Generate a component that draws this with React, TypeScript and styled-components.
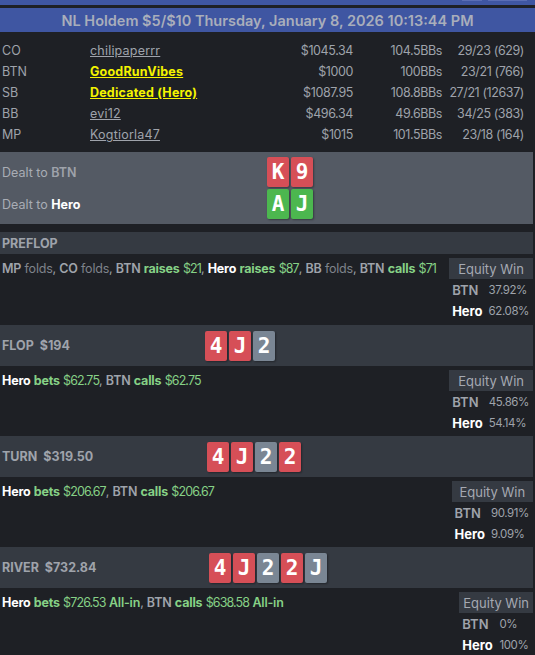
import React from 'react';
import styled, { createGlobalStyle } from 'styled-components';

const GlobalStyle = createGlobalStyle`
  body {
    margin: 0;
    background: #1e2025;
    font-family: Inter, "DejaVu Sans", sans-serif;
  }
`;

const COLORS = {
  bg: '#1e2025',
  blue: '#3f56a2',
  blueLight: '#5a6db4',
  bar: '#353a42',
  panel: '#545a64',
  text: '#9fa3ab',
  dim: '#7e838b',
  white: '#ffffff',
  yellow: '#f4f400',
  green: '#86d186',
  red: '#d64f57',
  cardGreen: '#4cb74f',
  cardGray: '#7a8694',
};

const TopStrip = styled.div`
  height: 5px;
  background: ${COLORS.blue};
  display: flex;
  justify-content: flex-end;
  gap: 6px;
  padding-right: 8px;
  border-bottom: 3px solid ${COLORS.bg};
`;

const StripButton = styled.div<{ $w: number }>`
  width: ${({ $w }) => $w}px;
  height: 1px;
  background: ${COLORS.blueLight};
`;

const TitleBar = styled.div`
  height: 24px;
  background: ${COLORS.blue};
  color: #a9aebb;
  font-size: 14.5px;
  font-weight: 600;
  display: flex;
  align-items: center;
  justify-content: center;
`;

const Content = styled.div`
  margin-right: 2px;
`;

const PlayerTable = styled.div`
  padding: 8px 9px 7px 2px;
  display: grid;
  grid-template-columns: 88px 1fr 90px 89px 82px;
  grid-auto-rows: 21px;
  align-items: center;
  font-size: 12.5px;
  color: ${COLORS.text};
`;

const Pos = styled.div``;

const Name = styled.span<{ $hl?: boolean }>`
  text-decoration: underline;
  color: ${({ $hl }) => ($hl ? COLORS.yellow : COLORS.text)};
  font-weight: ${({ $hl }) => ($hl ? 700 : 400)};
  letter-spacing: 0.2px;
`;

const Num = styled.div`
  text-align: right;
  letter-spacing: -0.4px;
`;

const DealtPanel = styled.div`
  background: ${COLORS.panel};
  padding: 4px 0;
  margin-bottom: 8px;
`;

const DealtRow = styled.div`
  display: grid;
  grid-template-columns: 265px auto;
  align-items: center;
  height: 32px;
  padding-left: 2px;
  font-size: 12.5px;
  color: #a9adb5;
`;

const Who = styled.span<{ $hero?: boolean }>`
  font-weight: ${({ $hero }) => ($hero ? 700 : 600)};
  color: ${({ $hero }) => ($hero ? COLORS.white : COLORS.text)};
`;

const Cards = styled.div`
  display: flex;
  gap: 2px;
`;

const Card = styled.div<{ $bg: string }>`
  width: 22px;
  height: 30px;
  border-radius: 2px;
  background: ${({ $bg }) => $bg};
  color: #fff;
  font-family: "DejaVu Sans Mono", monospace;
  font-weight: 700;
  font-size: 21px;
  display: flex;
  align-items: center;
  justify-content: center;
  box-shadow: 1px 1px 2px rgba(0, 0, 0, 0.35);
`;

const StreetBar = styled.div<{ $labelW: number; $tall: boolean }>`
  background: ${COLORS.bar};
  display: grid;
  grid-template-columns: ${({ $labelW }) => $labelW}px auto;
  align-items: center;
  height: ${({ $tall }) => ($tall ? 41 : 22)}px;
  padding-left: 2px;
`;

const StreetLabel = styled.div`
  color: ${COLORS.text};
  font-weight: 700;
  font-size: 12.5px;
  display: flex;
  gap: 6px;
`;

const StreetBody = styled.div<{ $h: number }>`
  display: flex;
  justify-content: space-between;
  align-items: flex-start;
  height: ${({ $h }) => $h}px;
  padding-left: 2px;
`;

const ActionLine = styled.div`
  padding-top: 4px;
  line-height: 21px;
  font-size: 12.5px;
  color: ${COLORS.text};
  letter-spacing: -0.2px;
`;

const Verb = styled.span<{ $fold?: boolean }>`
  color: ${({ $fold }) => ($fold ? COLORS.dim : COLORS.green)};
  font-weight: ${({ $fold }) => ($fold ? 400 : 700)};
`;

const Amount = styled.span`
  color: ${COLORS.green};
  letter-spacing: -0.9px;
`;

const AllIn = styled.span`
  color: ${COLORS.green};
  font-weight: 600;
`;

const Equity = styled.div`
  margin-top: 4px;
  display: grid;
  grid-template-columns: auto auto;
  grid-auto-rows: 21px;
  align-items: center;
`;

const EquityHead = styled.div`
  grid-column: 1 / -1;
  background: ${COLORS.bar};
  color: #a5a9b2;
  font-size: 13px;
  height: 21px;
  padding: 0 4px;
  display: flex;
  align-items: center;
  justify-content: center;
`;

const EqName = styled.span<{ $hero?: boolean }>`
  padding: 0 6px 0 3px;
  font-size: 13px;
  font-weight: ${({ $hero }) => ($hero ? 700 : 600)};
  color: ${({ $hero }) => ($hero ? COLORS.white : COLORS.text)};
`;

const EqVal = styled.span`
  padding-right: 4px;
  font-size: 11.5px;
  letter-spacing: -0.4px;
  color: ${COLORS.text};
`;

const players = [
  { pos: 'CO', name: 'chilipaperrr', stack: '$1045.34', bbs: '104.5BBs', stats: '29/23 (629)' },
  { pos: 'BTN', name: 'GoodRunVibes', stack: '$1000', bbs: '100BBs', stats: '23/21 (766)', hl: true },
  { pos: 'SB', name: 'Dedicated (Hero)', stack: '$1087.95', bbs: '108.8BBs', stats: '27/21 (12637)', hl: true },
  { pos: 'BB', name: 'evi12', stack: '$496.34', bbs: '49.6BBs', stats: '34/25 (383)' },
  { pos: 'MP', name: 'Kogtiorla47', stack: '$1015', bbs: '101.5BBs', stats: '23/18 (164)' },
];

type Act = { who: string; verb: string; amt?: string; allin?: boolean };

const R = COLORS.red;
const G = COLORS.cardGray;

const streets: {
  name: string;
  pot?: string;
  labelW: number;
  cards: [string, string][];
  acts: Act[];
  eq: [string, string][];
  h: number;
}[] = [
  {
    name: 'PREFLOP',
    labelW: 203,
    cards: [],
    h: 71,
    acts: [
      { who: 'MP', verb: 'folds' },
      { who: 'CO', verb: 'folds' },
      { who: 'BTN', verb: 'raises', amt: '$21' },
      { who: 'Hero', verb: 'raises', amt: '$87' },
      { who: 'BB', verb: 'folds' },
      { who: 'BTN', verb: 'calls', amt: '$71' },
    ],
    eq: [['BTN', '37.92%'], ['Hero', '62.08%']],
  },
  {
    name: 'FLOP',
    pot: '$194',
    labelW: 203,
    cards: [['4', R], ['J', R], ['2', G]],
    h: 70,
    acts: [
      { who: 'Hero', verb: 'bets', amt: '$62.75' },
      { who: 'BTN', verb: 'calls', amt: '$62.75' },
    ],
    eq: [['BTN', '45.86%'], ['Hero', '54.14%']],
  },
  {
    name: 'TURN',
    pot: '$319.50',
    labelW: 205,
    cards: [['4', R], ['J', R], ['2', G], ['2', R]],
    h: 70,
    acts: [
      { who: 'Hero', verb: 'bets', amt: '$206.67' },
      { who: 'BTN', verb: 'calls', amt: '$206.67' },
    ],
    eq: [['BTN', '90.91%'], ['Hero', '9.09%']],
  },
  {
    name: 'RIVER',
    pot: '$732.84',
    labelW: 207,
    cards: [['4', R], ['J', R], ['2', G], ['2', R], ['J', G]],
    h: 70,
    acts: [
      { who: 'Hero', verb: 'bets', amt: '$726.53', allin: true },
      { who: 'BTN', verb: 'calls', amt: '$638.58', allin: true },
    ],
    eq: [['BTN', '0%'], ['Hero', '100%']],
  },
];

export default function App() {
  return (
    <>
      <GlobalStyle />
      <TopStrip>
        <StripButton $w={20} />
        <StripButton $w={39} />
      </TopStrip>
      <TitleBar>NL Holdem $5/$10 Thursday, January 8, 2026 10:13:44 PM</TitleBar>
      <Content>
        <PlayerTable>
          {players.map((p) => (
            <React.Fragment key={p.pos}>
              <Pos>{p.pos}</Pos>
              <div>
                <Name $hl={p.hl}>{p.name}</Name>
              </div>
              <Num>{p.stack}</Num>
              <Num>{p.bbs}</Num>
              <Num>{p.stats}</Num>
            </React.Fragment>
          ))}
        </PlayerTable>

        <DealtPanel>
          <DealtRow>
            <div>
              Dealt to <Who>BTN</Who>
            </div>
            <Cards>
              <Card $bg={COLORS.red}>K</Card>
              <Card $bg={COLORS.red}>9</Card>
            </Cards>
          </DealtRow>
          <DealtRow>
            <div>
              Dealt to <Who $hero>Hero</Who>
            </div>
            <Cards>
              <Card $bg={COLORS.cardGreen}>A</Card>
              <Card $bg={COLORS.cardGreen}>J</Card>
            </Cards>
          </DealtRow>
        </DealtPanel>

        {streets.map((s) => (
          <section key={s.name}>
            <StreetBar $labelW={s.labelW} $tall={s.cards.length > 0}>
              <StreetLabel>
                <span>{s.name}</span>
                {s.pot && <span>{s.pot}</span>}
              </StreetLabel>
              <Cards>
                {s.cards.map(([c, bg], i) => (
                  <Card key={i} $bg={bg}>{c}</Card>
                ))}
              </Cards>
            </StreetBar>
            <StreetBody $h={s.h}>
              <ActionLine>
                {s.acts.map((a, i) => (
                  <React.Fragment key={i}>
                    {i > 0 && ', '}
                    <Who $hero={a.who === 'Hero'}>{a.who}</Who>{' '}
                    <Verb $fold={a.verb === 'folds'}>{a.verb}</Verb>
                    {a.amt && <> <Amount>{a.amt}</Amount></>}
                    {a.allin && <> <AllIn>All-in</AllIn></>}
                  </React.Fragment>
                ))}
              </ActionLine>
              <Equity>
                <EquityHead>Equity Win</EquityHead>
                {s.eq.map(([n, v]) => (
                  <React.Fragment key={n}>
                    <EqName $hero={n === 'Hero'}>{n}</EqName>
                    <EqVal>{v}</EqVal>
                  </React.Fragment>
                ))}
              </Equity>
            </StreetBody>
          </section>
        ))}
      </Content>
    </>
  );
}
